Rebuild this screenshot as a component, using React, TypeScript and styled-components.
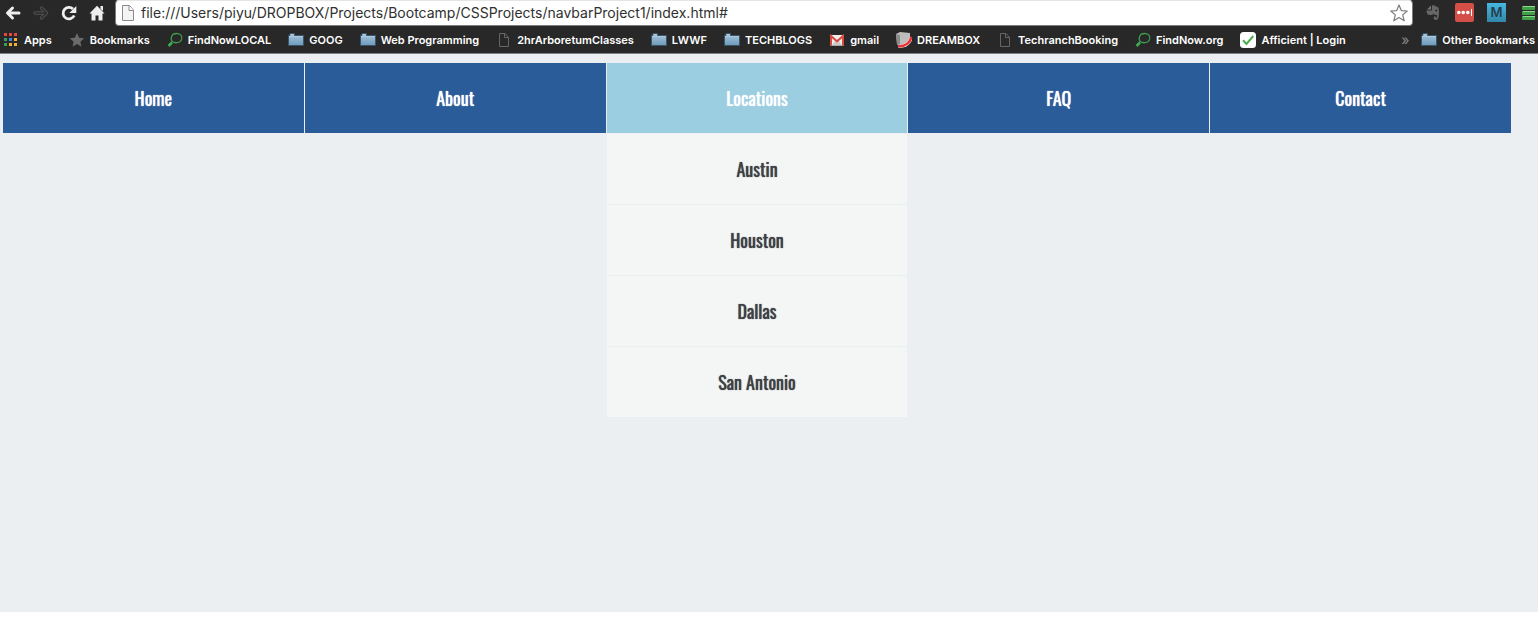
import React from 'react';
import styled, { createGlobalStyle, css } from 'styled-components';

const GlobalStyle = createGlobalStyle`
  *, *::before, *::after { box-sizing: border-box; }
  body { margin: 0; background: #fff; font-family: Inter, sans-serif; }
`;

const Window = styled.div`
  display: flex;
  flex-direction: column;
  min-height: 100vh;
  padding-bottom: 28px;
`;

const Chrome = styled.header`
  background: #282828;
  border-bottom: 1px solid #808080;
`;

const Toolbar = styled.div`
  display: flex;
  align-items: center;
  height: 26px;
  padding: 0 3px 0 5px;
`;

const IconButton = styled.button`
  display: block;
  flex: none;
  padding: 0;
  border: 0;
  background: none;
  line-height: 0;
  cursor: pointer;
`;

const NavButtons = styled.div`
  display: flex;
  gap: 12px;
  margin-right: 10px;
`;

const AddressBar = styled.div`
  display: flex;
  flex: 1;
  align-items: center;
  gap: 5px;
  height: 26px;
  padding: 0 4px;
  background: #fff;
  border: 1px solid #7c7c7c;
  border-top-color: #e4e4e4;
  border-radius: 4px;
`;

const AddressInput = styled.input`
  flex: 1;
  min-width: 0;
  padding: 0;
  border: 0;
  outline: 0;
  background: transparent;
  color: #303030;
  font: 14px/20px Inter, sans-serif;
`;

const Extensions = styled.div`
  display: flex;
  gap: 12px;
  margin-left: 10px;
`;

const BookmarkBar = styled.nav`
  display: flex;
  align-items: center;
  height: 27px;
  padding: 0 3px;
`;

const BookmarkList = styled.div`
  display: flex;
  flex: 1;
  gap: 17px;
  min-width: 0;
`;

const Bookmark = styled.a`
  display: flex;
  align-items: center;
  gap: 5px;
  color: #fff;
  font: 600 11px/16px Inter, sans-serif;
  text-decoration: none;
  white-space: nowrap;
`;

const Overflow = styled.button`
  margin-right: 12px;
  padding: 0;
  border: 0;
  background: none;
  color: #8a8a8a;
  font: 14px/16px Inter, sans-serif;
`;

const Page = styled.main`
  flex: 1;
  padding: 9px 27px 0 3px;
  background: #ebeff2;
`;

const Menu = styled.ul`
  display: grid;
  grid-template-columns: repeat(5, 1fr);
  gap: 1px;
  margin: 0;
  padding: 0;
  list-style: none;
`;

const MenuItem = styled.li`
  position: relative;
`;

const menuText = css`
  display: flex;
  align-items: center;
  justify-content: center;
  height: 70px;
  font: 400 18px/24px Oswald, 'Roboto Condensed', sans-serif;
  text-shadow: 0 0 1px currentColor;
  text-decoration: none;
`;

const MenuLink = styled.a<{ $active?: boolean }>`
  ${menuText}
  color: #fff;
  background: ${({ $active }) => ($active ? '#9acee0' : '#2a5c99')};
`;

const Submenu = styled.ul`
  position: absolute;
  top: 100%;
  left: 0;
  right: 0;
  margin: 0;
  padding: 0;
  list-style: none;
`;

const SubmenuLink = styled.a`
  ${menuText}
  height: 71px;
  border-top: 1px solid #ebeff0;
  color: #404046;
  background: #f4f6f5;
`;

const Svg = ({ w = 16, h = 16, children }: { w?: number; h?: number; children: React.ReactNode }) => (
  <svg width={w} height={h} viewBox={`0 0 ${w} ${h}`} fill="none" aria-hidden="true">
    {children}
  </svg>
);

const BackArrow = () => (
  <Svg>
    <path d="M14 8H3M7.500 3 2.500 8 7.500 13" stroke="#eee" strokeWidth="3" strokeLinecap="round" strokeLinejoin="round" />
  </Svg>
);

const ForwardArrow = () => (
  <Svg>
    <g strokeLinecap="round" strokeLinejoin="round">
      <path d="M2 8H13M8.500 3 13.500 8 8.500 13" stroke="#505050" strokeWidth="3.400" />
      <path d="M2 8H13M8.500 3 13.500 8 8.500 13" stroke="#2c2c2c" strokeWidth="1.400" />
    </g>
  </Svg>
);

const Reload = () => (
  <Svg>
    <path d="M13.200 10.500A5.800 5.800 0 1 1 12 4" stroke="#eee" strokeWidth="2.800" />
    <path d="M15.300 1v7H8.300z" fill="#eee" />
  </Svg>
);

const HomeIcon = () => (
  <Svg>
    <path d="M8 .8 15.500 8.500H13.500V15.500H9.500V10.500H6.500V15.500H2.500V8.500H.5z" fill="#eee" />
    <path d="M11.500 1H14V6L11.500 4z" fill="#eee" />
  </Svg>
);

const Doc = ({ stroke = '#666', fill = 'none' }: { stroke?: string; fill?: string }) => (
  <Svg>
    <path d="M3.500 1.500H9L12.500 5.500V14.500H3.500z" fill={fill} stroke={stroke} />
    <path d="M8.500 1.500V5.500H12.500" stroke={stroke} />
  </Svg>
);

const PageIcon = () => (
  <Svg>
    <path d="M2.500 .5H9.500L13.500 5V15.500H2.500z" fill="#f4f4f4" stroke="#8a8a8a" />
    <path d="M9 .5V5.500H13.500" stroke="#8a8a8a" fill="#fff" />
  </Svg>
);

const Folder = () => (
  <Svg>
    <defs>
      <linearGradient id="folder" x1="0" y1="0" x2="0" y2="1">
        <stop offset="0" stopColor="#a9c8de" />
        <stop offset="1" stopColor="#6d9abb" />
      </linearGradient>
    </defs>
    <path d="M.5 13.500V3.500H2V1.500H6.500V3.500H15.500V13.500z" fill="url(#folder)" stroke="#3c5468" />
    <path d="M2.500 2.500H6M1 4.500H15" stroke="#a9c8de" />
  </Svg>
);

const AppsIcon = () => {
  const colors = ['#e8473f', '#e8473f', '#e8473f', '#35a155', '#4284f0', '#f0b030', '#35a155', '#f0b030', '#f0b030'];
  return (
    <Svg>
      {colors.map((c, i) => (
        <rect key={i} x={1 + (i % 3) * 5} y={1 + Math.floor(i / 3) * 5} width="3" height="3" fill={c} />
      ))}
    </Svg>
  );
};

const StarFull = () => (
  <Svg>
    <path d="M8 1 10.100 5.800 15.200 6.300 11.400 9.700 12.500 14.800 8 12.100 3.500 14.800 4.600 9.700.8 6.300 5.900 5.800z" fill="#6b6b6b" />
  </Svg>
);

const Magnifier = () => (
  <Svg>
    <path d="M5 9.500C3.600 7 4.200 3.800 6 2.400 8.500 1 12.800 1.200 14.200 3.500 15.400 6 14.600 8.800 12.500 10 10 11 7 10.800 5 9.500Z" stroke="#3f9e4d" strokeWidth="1.300" />
    <path d="M5 10.500 1.500 14" stroke="#44ad53" strokeWidth="2.500" />
  </Svg>
);

const Gmail = () => (
  <Svg>
    <path d="M1 3H15V13.500H1z" fill="#f1eeee" />
    <path d="M3 13.500 6 9 8 10.500 10 9 13 13.500z" fill="#cfcaca" />
    <path d="M2 13.500V4L8 9.300 14 4V13.500" stroke="#d8493e" strokeWidth="2" />
  </Svg>
);

const Dreambox = () => (
  <Svg>
    <path d="M0 2 4 0 14 1V10L10 15H4L1 12z" fill="#bdbdbd" />
    <path d="M0 2 4 3V15L1 12z" fill="#8c8c8c" />
    <path d="M15.300 5C14.500 10 10 14.500 2.500 14.200" stroke="#e8dcdc" strokeWidth="3.400" />
    <path d="M15.300 5C14.500 10 10 14.500 2.500 14.200" stroke="#ee2f35" strokeWidth="2.400" />
  </Svg>
);

const CheckIcon = () => (
  <Svg>
    <rect width="16" height="16" rx="3.500" fill="#fff" />
    <path d="M3 8.200 6.500 12 13.200 4" stroke="#4caf50" strokeWidth="2" />
  </Svg>
);

const StarOutline = () => (
  <Svg w={18} h={18}>
    <path
      d="M9 1 11.300 6.600 17.200 7 12.700 10.900 14.200 16.800 9 13.600 3.800 16.800 5.300 10.900.8 7 6.700 6.600z"
      stroke="#7b7b7b"
      strokeWidth="1.200"
      strokeLinejoin="round"
    />
  </Svg>
);

const Elephant = () => (
  <Svg w={20} h={20}>
    <path d="M4 6.500 8 2.500V6.500z" fill="#777" />
    <path
      d="M9 2.500C11 2 12 2.700 12.500 3.500 15 3.500 16 4.500 16 8.500 16 13.500 15.500 17 13 17 10 17 10 13 12.500 13V14.500H14V12C12 12 11 11.500 10.800 10.500 10 12.500 5.500 12.500 4.500 11 3.800 10 3.500 9 3.500 7.500H9z"
      fill="#666"
    />
    <circle cx="13.300" cy="7.500" r="1" fill="#282828" />
  </Svg>
);

const LastPass = () => (
  <Svg w={20} h={20}>
    <rect width="19" height="19" rx="2" fill="#d34f48" />
    <circle cx="3.800" cy="9.500" r="1.800" fill="#fff" />
    <circle cx="8.300" cy="9.500" r="1.800" fill="#fff" />
    <circle cx="12.800" cy="9.500" r="1.800" fill="#fff" />
    <path d="M16.500 6V13" stroke="#fff" />
  </Svg>
);

const MIcon = () => (
  <Svg w={20} h={20}>
    <defs>
      <linearGradient id="tile" x1="0" y1="0" x2="0" y2="1">
        <stop offset="0" stopColor="#45b9e0" />
        <stop offset="1" stopColor="#3187a9" />
      </linearGradient>
    </defs>
    <rect width="19" height="19" fill="url(#tile)" />
    <text x="9.500" y="14" textAnchor="middle" fontFamily="Inter, sans-serif" fontSize="13" fontWeight="600" fill="#273c4c">
      M
    </text>
  </Svg>
);

const Bars = () => (
  <Svg w={16} h={20}>
    {[3, 8, 13].map((y) => (
      <g key={y}>
        <rect x="3" y={y} width="13" height="4" rx="1" fill="#3fa048" />
        <path d={`M4 ${y}.500H16`} stroke="#8ed78f" />
      </g>
    ))}
  </Svg>
);

const bookmarks: [string, React.ReactNode][] = [
  ['Apps', <AppsIcon />],
  ['Bookmarks', <StarFull />],
  ['FindNowLOCAL', <Magnifier />],
  ['GOOG', <Folder />],
  ['Web Programming', <Folder />],
  ['2hrArboretumClasses', <Doc />],
  ['LWWF', <Folder />],
  ['TECHBLOGS', <Folder />],
  ['gmail', <Gmail />],
  ['DREAMBOX', <Dreambox />],
  ['TechranchBooking', <Doc />],
  ['FindNow.org', <Magnifier />],
  ['Afficient | Login', <CheckIcon />],
];

const menu: { label: string; children?: string[] }[] = [
  { label: 'Home' },
  { label: 'About' },
  { label: 'Locations', children: ['Austin', 'Houston', 'Dallas', 'San Antonio'] },
  { label: 'FAQ' },
  { label: 'Contact' },
];

export default function App() {
  return (
    <Window>
      <GlobalStyle />
      <Chrome>
        <Toolbar>
          <NavButtons>
            <IconButton aria-label="Back"><BackArrow /></IconButton>
            <IconButton aria-label="Forward"><ForwardArrow /></IconButton>
            <IconButton aria-label="Reload"><Reload /></IconButton>
            <IconButton aria-label="Home page"><HomeIcon /></IconButton>
          </NavButtons>
          <AddressBar>
            <PageIcon />
            <AddressInput
              aria-label="Address"
              defaultValue="file:///Users/piyu/DROPBOX/Projects/Bootcamp/CSSProjects/navbarProject1/index.html#"
            />
            <IconButton aria-label="Bookmark this page"><StarOutline /></IconButton>
          </AddressBar>
          <Extensions>
            <IconButton aria-label="Evernote"><Elephant /></IconButton>
            <IconButton aria-label="LastPass"><LastPass /></IconButton>
            <IconButton aria-label="Gmail extension"><MIcon /></IconButton>
            <IconButton aria-label="Browser menu"><Bars /></IconButton>
          </Extensions>
        </Toolbar>
        <BookmarkBar aria-label="Bookmarks">
          <BookmarkList>
            {bookmarks.map(([label, icon]) => (
              <Bookmark key={label} href="#">{icon}{label}</Bookmark>
            ))}
          </BookmarkList>
          <Overflow aria-label="More bookmarks">»</Overflow>
          <Bookmark href="#"><Folder />Other Bookmarks</Bookmark>
        </BookmarkBar>
      </Chrome>
      <Page>
        <nav aria-label="Main">
          <Menu>
            {menu.map(({ label, children }) => (
              <MenuItem key={label}>
                <MenuLink href="#" $active={!!children}>{label}</MenuLink>
                {children && (
                  <Submenu>
                    {children.map((city) => (
                      <li key={city}><SubmenuLink href="#">{city}</SubmenuLink></li>
                    ))}
                  </Submenu>
                )}
              </MenuItem>
            ))}
          </Menu>
        </nav>
      </Page>
    </Window>
  );
}
